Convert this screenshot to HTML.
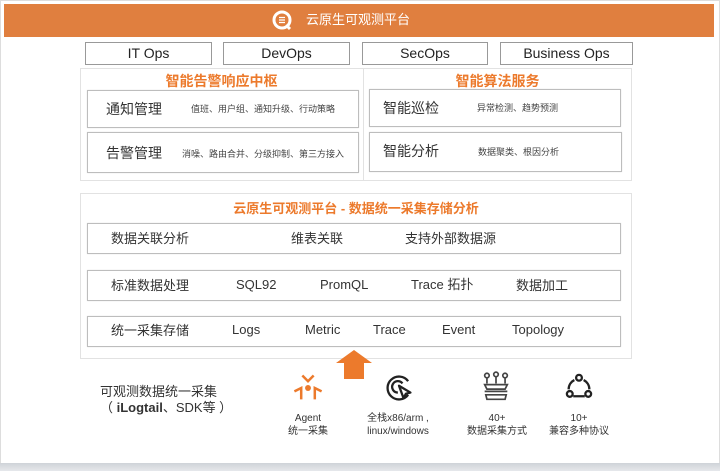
<!DOCTYPE html>
<html><head><meta charset="utf-8"><style>
*{margin:0;padding:0;box-sizing:border-box}
body{width:720px;height:471px;background:#fff;position:relative;overflow:hidden;font-family:"Liberation Sans","Noto Sans CJK SC",sans-serif;color:#333}
.a{position:absolute}
.bx{position:absolute;border:1px solid #bdbdbd;background:#fff;box-shadow:0 0 1px #ddd}
.ops{position:absolute;top:42px;height:23px;border:1px solid #999;font-size:14px;text-align:center;line-height:21px;color:#222}
.or{color:#ec7a2c;font-weight:bold;font-size:13px;position:absolute;text-align:center;line-height:16px}
.t{position:absolute;font-size:13px;color:#333;white-space:nowrap;line-height:16px}
.b{font-size:14px}
.s{position:absolute;font-size:9px;color:#444;white-space:nowrap;line-height:12px}
.lb{position:absolute;font-size:10px;color:#333;text-align:center;line-height:13px;width:100px}
</style></head><body>
<div class="a" style="left:0;top:0;width:720px;height:471px;border:1px solid #ddd"></div>
<div class="a" style="left:4px;top:4px;width:710px;height:33px;background:#e07f3f"></div>
<svg class="a" style="left:271px;top:9px" width="22" height="22" viewBox="0 0 22 22"><circle cx="11" cy="11" r="8" fill="none" stroke="#fff" stroke-width="3"/><path d="M15 16l4 4" stroke="#fff" stroke-width="3"/><path d="M8 8.5h6M8 11h6M8 13.5h6" stroke="#fff" stroke-width="1.3"/></svg>
<div class="a" style="left:306px;top:12px;color:#fff;font-size:13px;line-height:16px">云原生可观测平台</div>
<div class="ops" style="left:85px;width:127px">IT Ops</div>
<div class="ops" style="left:223px;width:127px">DevOps</div>
<div class="ops" style="left:362px;width:126px">SecOps</div>
<div class="ops" style="left:500px;width:133px">Business Ops</div>
<div class="a" style="left:80px;top:68px;width:552px;height:113px;border:1px solid #e2e2e2"></div>
<div class="a" style="left:363px;top:68px;width:1px;height:113px;background:#e2e2e2"></div>
<div class="or" style="left:80px;top:73px;width:283px;font-size:14px">智能告警响应中枢</div>
<div class="or" style="left:363px;top:73px;width:269px;font-size:14px">智能算法服务</div>
<div class="bx" style="left:87px;top:90px;width:272px;height:38px"></div>
<div class="bx" style="left:87px;top:132px;width:272px;height:41px"></div>
<div class="bx" style="left:369px;top:89px;width:252px;height:38px"></div>
<div class="bx" style="left:369px;top:132px;width:253px;height:40px"></div>
<div class="t b" style="left:106px;top:101px">通知管理</div>
<div class="s" style="left:191px;top:103px">值班、用户组、通知升级、行动策略</div>
<div class="t b" style="left:106px;top:145px">告警管理</div>
<div class="s" style="left:182px;top:148px">消噪、路由合并、分级抑制、第三方接入</div>
<div class="t b" style="left:383px;top:100px">智能巡检</div>
<div class="s" style="left:477px;top:102px">异常检测、趋势预测</div>
<div class="t b" style="left:383px;top:143px">智能分析</div>
<div class="s" style="left:478px;top:146px">数据聚类、根因分析</div>
<div class="a" style="left:80px;top:193px;width:552px;height:166px;border:1px solid #e2e2e2"></div>
<div class="or" style="left:80px;top:201px;width:552px">云原生可观测平台 - 数据统一采集存储分析</div>
<div class="bx" style="left:87px;top:223px;width:534px;height:31px"></div>
<div class="bx" style="left:87px;top:270px;width:534px;height:31px"></div>
<div class="bx" style="left:87px;top:316px;width:534px;height:31px"></div>
<div class="t" style="left:111px;top:231px">数据关联分析</div>
<div class="t" style="left:291px;top:231px">维表关联</div>
<div class="t" style="left:405px;top:231px">支持外部数据源</div>
<div class="t" style="left:111px;top:278px">标准数据处理</div>
<div class="t" style="left:236px;top:277px">SQL92</div>
<div class="t" style="left:320px;top:277px">PromQL</div>
<div class="t" style="left:411px;top:277px">Trace 拓扑</div>
<div class="t" style="left:516px;top:278px">数据加工</div>
<div class="t" style="left:111px;top:323px">统一采集存储</div>
<div class="t" style="left:232px;top:322px">Logs</div>
<div class="t" style="left:305px;top:322px">Metric</div>
<div class="t" style="left:373px;top:322px">Trace</div>
<div class="t" style="left:442px;top:322px">Event</div>
<div class="t" style="left:512px;top:322px">Topology</div>
<svg class="a" style="left:334px;top:349px" width="40" height="30"><path d="M2 14L20 1 38 14H30V30H10V14Z" fill="#ec7a2c"/></svg>
<div class="a" style="left:100px;top:384px;font-size:13px;line-height:16px;color:#333">可观测数据统一采集<br>（ <b>iLogtail</b>、SDK等 ）</div>
<svg class="a" style="left:291px;top:373px" width="34" height="30" viewBox="0 0 30 26"><g fill="none" stroke="#ec7a2c" stroke-width="2.2"><path d="M10 2l5 5 5-5M3 16l6-3v10M27 16l-6-3v10"/></g><circle cx="15" cy="13" r="2.6" fill="#ec7a2c"/></svg>
<svg class="a" style="left:383px;top:372px" width="32" height="32" viewBox="0 0 28 28"><g fill="none" stroke="#222" stroke-width="2"><path d="M22 8A10 10 0 1 0 22 20"/><path d="M17 10A5 5 0 1 0 13 18"/><path d="M14 12l10 6-4 1-2 4z" stroke-linejoin="round"/></g></svg>
<svg class="a" style="left:480px;top:371px" width="32" height="34" viewBox="0 0 28 30"><g fill="none" stroke="#444" stroke-width="1.5"><circle cx="6" cy="4" r="2"/><circle cx="14" cy="3" r="2"/><circle cx="22" cy="4" r="2"/><path d="M6 6v5M14 5v6M22 6v5M4 12h20l-2 4H6zM4 18h20M5 21h18l-1 4H6z"/></g></svg>
<svg class="a" style="left:564px;top:372px" width="30" height="30" viewBox="0 0 26 26"><g fill="none" stroke="#222" stroke-width="2"><circle cx="13" cy="5" r="2.5"/><circle cx="5" cy="19" r="2.5"/><circle cx="21" cy="19" r="2.5"/><path d="M9 7A9 9 0 0 0 4 15M17 7A9 9 0 0 1 22 15M8 21h10"/></g></svg>
<div class="lb" style="left:258px;top:412px">Agent<br>统一采集</div>
<div class="lb" style="left:348px;top:412px">全栈x86/arm ,<br>linux/windows</div>
<div class="lb" style="left:447px;top:412px">40+<br>数据采集方式</div>
<div class="lb" style="left:529px;top:412px">10+<br>兼容多种协议</div>
<div class="a" style="left:0;top:463px;width:720px;height:8px;background:linear-gradient(#cfd3d8,#e6e8eb)"></div>
</body></html>
